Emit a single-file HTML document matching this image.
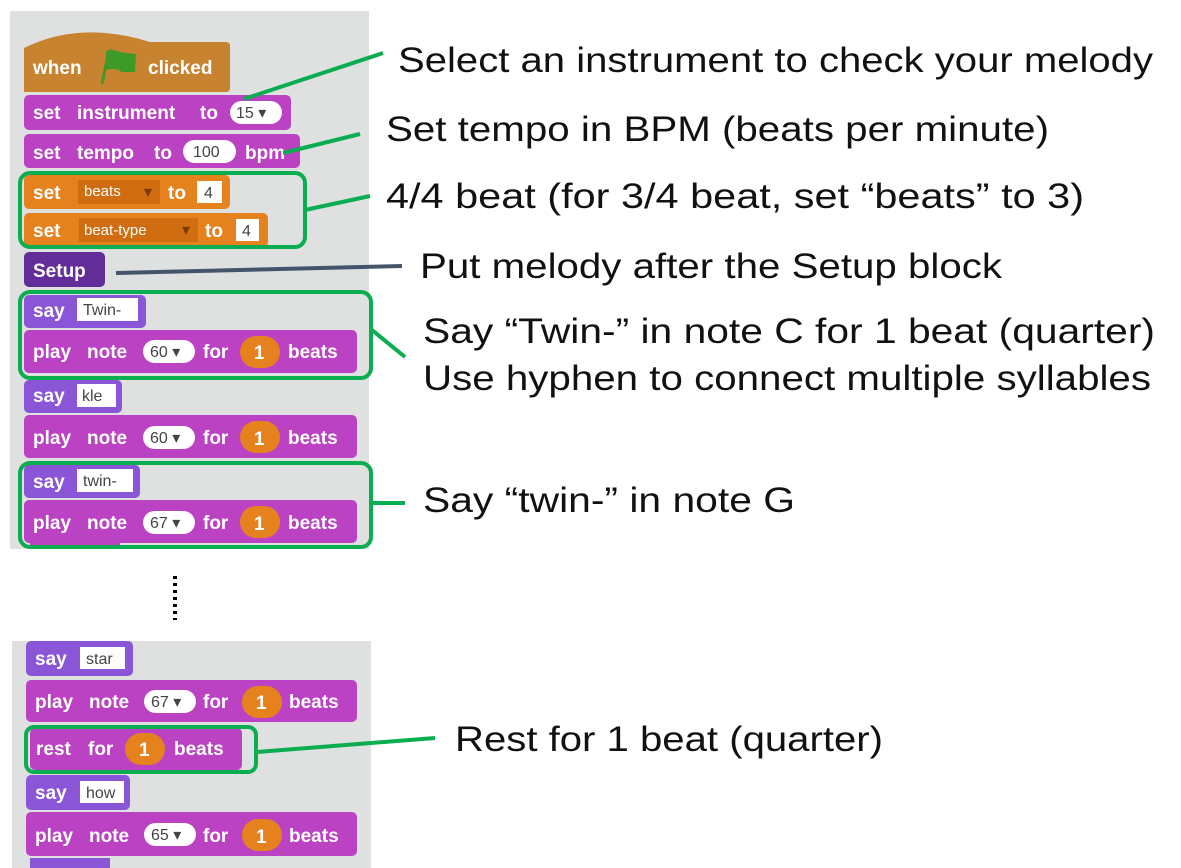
<!DOCTYPE html>
<html><head><meta charset="utf-8"><style>
html,body{margin:0;padding:0;background:#fff;width:1181px;height:868px;overflow:hidden}
svg{display:block}
.b{font-family:"Liberation Sans",sans-serif;font-weight:bold;font-size:19px;fill:#fff}
.i{font-family:"Liberation Sans",sans-serif;font-size:16px;fill:#444}
.iw{font-family:"Liberation Sans",sans-serif;font-size:15px;fill:#fff}
.t{font-family:"Liberation Sans","Noto Sans CJK JP",sans-serif;font-size:35px;fill:#111}
</style></head><body>
<svg width="1181" height="868" viewBox="0 0 1181 868" xmlns="http://www.w3.org/2000/svg">
<rect x="10" y="11" width="359" height="538" fill="#dfe0e0"/>
<rect x="12" y="641" width="359" height="227" fill="#dfe0e0"/>
<!-- hat -->
<path d="M24 92 V48 Q80 20 150 42 H226 Q230 42 230 46 V88 Q230 92 226 92 Z" fill="#c88330"/>
<text x="33" y="74" class="b">when</text>
<line x1="102" y1="84" x2="109" y2="50" stroke="#3e9a26" stroke-width="3"/>
<path d="M106 52 L111 49 Q119 52 126 53 L136 54 L135 72 L122 72 Q114 67 106 70 Z" fill="#3e9a26"/>
<text x="148" y="74" class="b">clicked</text>
<!-- set instrument -->
<rect x="24" y="95" width="267" height="35" rx="5" fill="#bb42c3"/>
<text x="33" y="119" class="b">set</text><text x="77" y="119" class="b">instrument</text><text x="200" y="119" class="b">to</text>
<rect x="230" y="101" width="52" height="23" rx="11.5" fill="#fff"/><text x="236" y="118" class="i">15 ▾</text>
<!-- tempo -->
<rect x="24" y="134" width="276" height="34" rx="5" fill="#bb42c3"/>
<text x="33" y="159" class="b">set</text><text x="77" y="159" class="b">tempo</text><text x="154" y="159" class="b">to</text>
<rect x="183" y="140" width="53" height="23" rx="11.5" fill="#fff"/><text x="193" y="157" class="i">100</text>
<text x="245" y="159" class="b">bpm</text>
<!-- beats -->
<rect x="24" y="175" width="206" height="34" rx="5" fill="#e6821e"/>
<text x="33" y="199" class="b">set</text>
<rect x="78" y="180" width="82" height="24" fill="#cf6d10"/><text x="84" y="196" class="iw">beats</text><text x="144" y="197" class="i" style="fill:#7a3a00">▾</text>
<text x="168" y="199" class="b">to</text>
<rect x="197" y="181" width="25" height="22" fill="#fff"/><text x="204" y="198" class="i">4</text>
<rect x="24" y="213" width="244" height="34" rx="5" fill="#e6821e"/>
<text x="33" y="237" class="b">set</text>
<rect x="79" y="218" width="119" height="24" fill="#cf6d10"/><text x="84" y="235" class="iw">beat-type</text><text x="182" y="235" class="i" style="fill:#7a3a00">▾</text>
<text x="205" y="237" class="b">to</text>
<rect x="236" y="219" width="23" height="22" fill="#fff"/><text x="242" y="236" class="i">4</text>
<!-- Setup -->
<rect x="24" y="252" width="81" height="35" rx="5" fill="#632d99"/>
<text x="33" y="277" class="b">Setup</text>
<!-- say / play rows -->
<rect x="24" y="295" width="122" height="33" rx="5" fill="#8a55d7"/>
<text x="33" y="317" class="b">say</text><rect x="77" y="298" width="61" height="23" fill="#fff"/><text x="83" y="315" class="i">Twin-</text>
<rect x="24" y="330" width="333" height="43" rx="5" fill="#bb42c3"/>
<text x="33" y="358" class="b">play</text><text x="87" y="358" class="b">note</text>
<rect x="143" y="340" width="52" height="23" rx="11.5" fill="#fff"/><text x="150" y="357" class="i">60 ▾</text>
<text x="203" y="358" class="b">for</text>
<rect x="240" y="336" width="40" height="32" rx="16" fill="#e6821e"/><text x="254" y="359" class="b">1</text>
<text x="288" y="358" class="b">beats</text>
<rect x="24" y="380" width="98" height="33" rx="5" fill="#8a55d7"/>
<text x="33" y="402" class="b">say</text><rect x="77" y="384" width="39" height="23" fill="#fff"/><text x="82" y="401" class="i">kle</text>
<rect x="24" y="415" width="333" height="43" rx="5" fill="#bb42c3"/>
<text x="33" y="444" class="b">play</text><text x="87" y="444" class="b">note</text>
<rect x="143" y="426" width="52" height="23" rx="11.5" fill="#fff"/><text x="150" y="443" class="i">60 ▾</text>
<text x="203" y="444" class="b">for</text>
<rect x="240" y="421" width="40" height="32" rx="16" fill="#e6821e"/><text x="254" y="445" class="b">1</text>
<text x="288" y="444" class="b">beats</text>
<rect x="24" y="465" width="116" height="33" rx="5" fill="#8a55d7"/>
<text x="33" y="488" class="b">say</text><rect x="77" y="469" width="56" height="23" fill="#fff"/><text x="83" y="486" class="i">twin-</text>
<rect x="24" y="500" width="333" height="43" rx="5" fill="#bb42c3"/>
<text x="33" y="529" class="b">play</text><text x="87" y="529" class="b">note</text>
<rect x="143" y="511" width="52" height="23" rx="11.5" fill="#fff"/><text x="150" y="528" class="i">67 ▾</text>
<text x="203" y="529" class="b">for</text>
<rect x="240" y="506" width="40" height="32" rx="16" fill="#e6821e"/><text x="254" y="530" class="b">1</text>
<text x="288" y="529" class="b">beats</text>
<rect x="30" y="543" width="90" height="6" fill="#bb42c3"/>
<!-- dots -->
<line x1="175" y1="576" x2="175" y2="620" stroke="#000" stroke-width="4" stroke-dasharray="3 4"/>
<!-- panel 2 -->
<rect x="26" y="641" width="107" height="35" rx="5" fill="#8a55d7"/>
<text x="35" y="665" class="b">say</text><rect x="80" y="647" width="45" height="22" fill="#fff"/><text x="86" y="664" class="i">star</text>
<rect x="26" y="680" width="331" height="42" rx="5" fill="#bb42c3"/>
<text x="35" y="708" class="b">play</text><text x="89" y="708" class="b">note</text>
<rect x="144" y="690" width="52" height="23" rx="11.5" fill="#fff"/><text x="151" y="707" class="i">67 ▾</text>
<text x="203" y="708" class="b">for</text>
<rect x="242" y="686" width="40" height="32" rx="16" fill="#e6821e"/><text x="256" y="709" class="b">1</text>
<text x="289" y="708" class="b">beats</text>
<rect x="30" y="728" width="212" height="42" rx="5" fill="#bb42c3"/>
<text x="36" y="755" class="b">rest</text><text x="88" y="755" class="b">for</text>
<rect x="125" y="733" width="40" height="32" rx="16" fill="#e6821e"/><text x="139" y="756" class="b">1</text>
<text x="174" y="755" class="b">beats</text>
<rect x="26" y="775" width="104" height="35" rx="5" fill="#8a55d7"/>
<text x="35" y="799" class="b">say</text><rect x="80" y="781" width="44" height="22" fill="#fff"/><text x="86" y="798" class="i">how</text>
<rect x="26" y="812" width="331" height="44" rx="5" fill="#bb42c3"/>
<text x="35" y="842" class="b">play</text><text x="89" y="842" class="b">note</text>
<rect x="144" y="823" width="52" height="23" rx="11.5" fill="#fff"/><text x="151" y="840" class="i">65 ▾</text>
<text x="203" y="842" class="b">for</text>
<rect x="242" y="819" width="40" height="32" rx="16" fill="#e6821e"/><text x="256" y="843" class="b">1</text>
<text x="289" y="842" class="b">beats</text>
<rect x="30" y="858" width="80" height="10" fill="#8a55d7"/>
<!-- green annotations -->
<g fill="none" stroke="#0aad4f" stroke-width="4">
<rect x="20" y="173" width="285" height="74" rx="10"/>
<rect x="20" y="292" width="351" height="86" rx="10"/>
<rect x="20" y="463" width="351" height="84" rx="10"/>
<rect x="26" y="727" width="230" height="45" rx="8"/>
<line x1="244" y1="99" x2="383" y2="53"/>
<line x1="283" y1="153" x2="360" y2="134"/>
<line x1="305" y1="210" x2="370" y2="196"/>
<line x1="372" y1="330" x2="405" y2="357"/>
<line x1="372" y1="503" x2="405" y2="503"/>
<line x1="257" y1="752" x2="435" y2="738"/>
</g>
<line x1="116" y1="273" x2="402" y2="266" stroke="#44546a" stroke-width="4"/>
<!-- labels -->
<text x="398" y="72" class="t" textLength="755" lengthAdjust="spacingAndGlyphs">Select an instrument to check your melody</text>
<text x="386" y="141" class="t" textLength="663" lengthAdjust="spacingAndGlyphs">Set tempo in BPM (beats per minute)</text>
<text x="386" y="208" class="t" textLength="698" lengthAdjust="spacingAndGlyphs">4/4 beat (for 3/4 beat, set “beats” to 3)</text>
<text x="420" y="278" class="t" textLength="582" lengthAdjust="spacingAndGlyphs">Put melody after the Setup block</text>
<text x="423" y="343" class="t" textLength="732" lengthAdjust="spacingAndGlyphs">Say “Twin-” in note C for 1 beat (quarter)</text>
<text x="423" y="390" class="t" textLength="728" lengthAdjust="spacingAndGlyphs">Use hyphen to connect multiple syllables</text>
<text x="423" y="512" class="t" textLength="372" lengthAdjust="spacingAndGlyphs">Say “twin-” in note G</text>
<text x="455" y="751" class="t" textLength="428" lengthAdjust="spacingAndGlyphs">Rest for 1 beat (quarter)</text>
</svg>
</body></html>
